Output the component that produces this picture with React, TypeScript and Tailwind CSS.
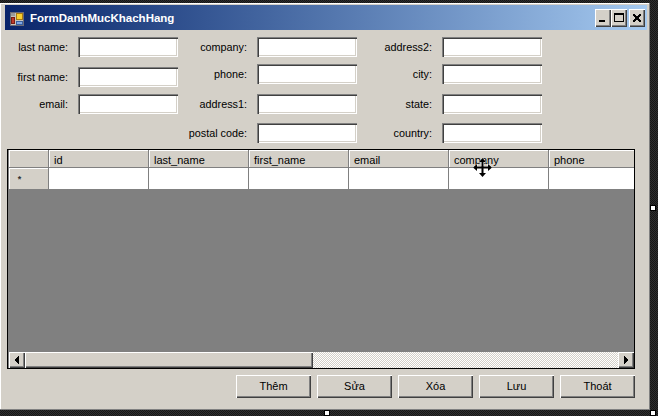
import React from "react"

const font = "font-['Liberation_Sans',Arial,sans-serif]"
const raised =
  "bg-[#d4d0c8] shadow-[inset_1px_1px_0_#fff,inset_-1px_-1px_0_#404040,inset_-2px_-2px_0_#808080]"

interface Field {
  label: string
  gap: string
}

const columns: { labelWidth: string; fields: Field[] }[] = [
  {
    labelWidth: "w-[63px]",
    fields: [
      { label: "last name:", gap: "mt-0" },
      { label: "first name:", gap: "mt-[10px]" },
      { label: "email:", gap: "mt-[7px]" },
    ],
  },
  {
    labelWidth: "w-[69px]",
    fields: [
      { label: "company:", gap: "mt-0" },
      { label: "phone:", gap: "mt-[7px]" },
      { label: "address1:", gap: "mt-[10px]" },
      { label: "postal code:", gap: "mt-[9px]" },
    ],
  },
  {
    labelWidth: "w-[75px]",
    fields: [
      { label: "address2:", gap: "mt-0" },
      { label: "city:", gap: "mt-[7px]" },
      { label: "state:", gap: "mt-[10px]" },
      { label: "country:", gap: "mt-[9px]" },
    ],
  },
]

const gridColumns = ["id", "last_name", "first_name", "email", "company", "phone"]
const actions = ["Thêm", "Sửa", "Xóa", "Lưu", "Thoát"]

const FormIcon = () => (
  <svg width="15" height="15" viewBox="0 0 15 15" className="mt-[2px] shrink-0" shapeRendering="crispEdges">
    <rect x="0.5" y="0.5" width="13" height="13" fill="#c8c4bc" stroke="#6b6b78" strokeWidth="1" />
    <rect x="1" y="1" width="4" height="3" fill="#9a9a9a" />
    <rect x="6.5" y="1.5" width="6" height="6" fill="#f8d030" stroke="#a87a10" strokeWidth="1" />
    <rect x="1.5" y="5.5" width="3" height="6" fill="#c0392b" stroke="#7a1d14" strokeWidth="1" />
    <rect x="6.5" y="9.5" width="6" height="3" fill="#7fa8e6" stroke="#3b5f9f" strokeWidth="1" />
  </svg>
)

const WindowButton = ({ kind, className }: { kind: "min" | "max" | "close"; className: string }) => (
  <div className={`${raised} ${className} flex h-[18px] w-[16px] items-center justify-center`}>
    <svg width="12" height="12" viewBox="0 0 12 12" shapeRendering="crispEdges">
      {kind === "min" && <rect x="2" y="8" width="6" height="2" fill="#000" />}
      {kind === "max" && (
        <>
          <rect x="1.5" y="1.5" width="9" height="8" fill="none" stroke="#000" />
          <rect x="1" y="1" width="10" height="2" fill="#000" />
        </>
      )}
      {kind === "close" && (
        <path d="M2 2h2v1h1v1h2v-1h1v-1h2v2h-1v1h-1v2h1v1h1v2h-2v-1h-1v-1h-2v1h-1v1h-2v-2h1v-1h1v-2h-1v-1h-1z" fill="#000" />
      )}
    </svg>
  </div>
)

const Handle = ({ className }: { className: string }) => (
  <div className={`absolute h-[6px] w-[6px] border border-black bg-white ${className}`} />
)

const MoveCursor = () => (
  <svg width="21" height="21" viewBox="-1 -1 21 21" className="absolute left-[472px] top-[157px]">
    <path
      d="M9.5 0 L13 4 H10.5 V8.5 H15 V6 L19 9.5 L15 13 V10.5 H10.5 V15 H13 L9.5 19 L6 15 H8.5 V10.5 H4 V13 L0 9.5 L4 6 V8.5 H8.5 V4 H6 Z"
      fill="#000"
      stroke="#fff"
      strokeWidth="1"
      paintOrder="stroke"
    />
  </svg>
)

const App: React.FC = () => {
  return (
    <div
      className={`${font} relative h-[416px] w-[658px] overflow-hidden bg-[#1a1a1a] bg-[image:repeating-conic-gradient(#2e2e2e_0_25%,#161616_0_50%)] bg-size-[2px_2px] pt-[3px] text-[11px] text-black`}
    >
      {/* Form */}
      <div className="flex h-[407px] w-[650px] flex-col border-b border-r border-[#808080] bg-[#d4d0c8] pl-[5px] pt-[2px] shadow-[inset_1px_1px_0_#fff]">
        {/* Title bar */}
        <div className="flex h-[25px] w-[642px] shrink-0 items-center bg-gradient-to-r from-[#0a246a] to-[#a6caf0] pl-[5px] pr-[2px] pt-px">
          <FormIcon />
          <span className="ml-[5px] pt-[2px] text-[11.5px] font-bold text-white">FormDanhMucKhachHang</span>
          <div className="ml-auto flex">
            <WindowButton kind="min" className="" />
            <WindowButton kind="max" className="" />
            <WindowButton kind="close" className="ml-[2px]" />
          </div>
        </div>

        {/* Fields */}
        <div className="flex h-[119px] shrink-0 pt-[7px]">
          {columns.map((col) => (
            <div key={col.fields[0].label} className="flex flex-col">
              {col.fields.map((f) => (
                <div key={f.label} className={`flex h-[20px] items-center ${f.gap}`}>
                  <span className={`${col.labelWidth} whitespace-nowrap pt-px text-right text-[10.8px]`}>{f.label}</span>
                  <input
                    readOnly
                    className="ml-[10px] h-[20px] w-[100px] bg-white shadow-[inset_1px_1px_0_#808080,inset_2px_2px_0_#404040,inset_-1px_-1px_0_#fff,inset_-2px_-2px_0_#d4d0c8]"
                  />
                </div>
              ))}
            </div>
          ))}
        </div>

        {/* Grid */}
        <div className="ml-[2px] flex h-[220px] w-[628px] shrink-0 flex-col overflow-hidden border border-black bg-[#808080] pl-px">
          <div className="flex h-[17px] shrink-0 bg-[#d4d0c8] shadow-[inset_0_1px_0_#fff]">
            <div className="h-full w-[40px] shrink-0 border-r border-[#808080] shadow-[inset_1px_1px_0_#fff]" />
            {gridColumns.map((c) => (
              <div
                key={c}
                className="flex h-full w-[100px] shrink-0 items-center border-r border-[#808080] pl-[5px] pt-[3px] shadow-[inset_1px_1px_0_#fff]"
              >
                {c}
              </div>
            ))}
          </div>
          <div className="flex h-[22px] shrink-0 border-t border-[#808080] bg-white">
            <div className="flex h-full w-[40px] shrink-0 items-center justify-center border-r border-[#808080] bg-[#d4d0c8] pr-[18px] pt-[2px] text-[9px] font-bold text-[#333] shadow-[inset_1px_1px_0_#fff]">
              *
            </div>
            {gridColumns.map((c) => (
              <div key={c} className="h-full w-[100px] shrink-0 border-r border-[#808080]" />
            ))}
          </div>
          <div className="flex-1" />
          {/* Scrollbar */}
          <div className="flex h-[16px] shrink-0">
            <div className={`${raised} flex h-full w-[16px] shrink-0 items-center justify-center`}>
              <svg width="6" height="8" viewBox="0 0 6 8" shapeRendering="crispEdges">
                <path d="M4 0h1v8h-1v-1h-1v-1h-1v-1h-1v-2h1v-1h1v-1h1z" fill="#000" />
              </svg>
            </div>
            <div className={`${raised} h-full w-[288px] shrink-0`} />
            <div className="h-full flex-1 bg-[image:repeating-conic-gradient(#fff_0_25%,#d4d0c8_0_50%)] bg-size-[2px_2px]" />
            <div className={`${raised} flex h-full w-[16px] shrink-0 items-center justify-center`}>
              <svg width="6" height="8" viewBox="0 0 6 8" shapeRendering="crispEdges">
                <path d="M1 0h1v1h1v1h1v1h1v2h-1v1h-1v1h-1v1h-1z" fill="#000" />
              </svg>
            </div>
          </div>
        </div>

        {/* Actions */}
        <div className="ml-[2px] mt-[6px] flex w-[628px] justify-end gap-[6px]">
          {actions.map((a) => (
            <div key={a} className={`${raised} flex h-[23px] w-[75px] items-center justify-center`}>
              {a}
            </div>
          ))}
        </div>
      </div>

      <MoveCursor />
      <Handle className="left-[650px] top-[205px]" />
      <Handle className="left-[324px] top-[410px]" />
      <Handle className="left-[650px] top-[410px]" />
    </div>
  )
}

export default App
